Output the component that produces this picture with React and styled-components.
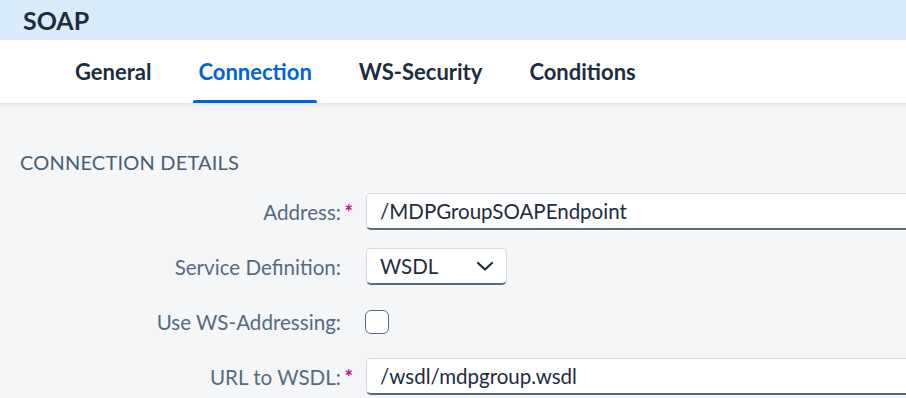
import styled, { createGlobalStyle } from 'styled-components';

const GlobalStyle = createGlobalStyle`
  html, body {
    margin: 0;
    padding: 0;
    background: #f5f6f7;
    overflow: hidden;
    font-family: Lato, 'Liberation Sans', sans-serif;
  }
`;

const Page = styled.div`
  width: 906px;
  height: 398px;
  overflow: hidden;
  background: #f5f6f7;
`;

const Header = styled.div`
  height: 40px;
  display: flex;
  align-items: center;
  padding-left: 23px;
  background: #d9ecfd;
  color: #1d2d3e;
  font-size: 25px;
  font-weight: 700;
`;

const TabBar = styled.div`
  height: 63px;
  display: flex;
  align-items: stretch;
  gap: 37px;
  padding-left: 70px;
  background: #fff;
  border-bottom: 1px solid #e5e7e9;
  box-shadow: 0 2px 2px rgba(34, 53, 72, 0.06);
`;

const Tab = styled.div`
  position: relative;
  display: flex;
  align-items: center;
  padding: 0 5px;
  font-size: 22px;
  font-weight: 700;
  color: ${(props) => (props.active ? '#0064d9' : '#1d2d3e')};

  &::after {
    content: '';
    display: ${(props) => (props.active ? 'block' : 'none')};
    position: absolute;
    left: 0;
    right: 0;
    bottom: 0;
    height: 3px;
    border-radius: 2px 2px 0 0;
    background: #0064d9;
  }
`;

const Content = styled.div`
  padding: 46px 0 0 20px;
`;

const SectionTitle = styled.div`
  color: #475e75;
  font-size: 20px;
  line-height: 24px;
  letter-spacing: 0.2px;
  margin-bottom: 10px;
`;

const Form = styled.div`
  display: grid;
  grid-template-columns: 333px 700px;
  grid-auto-rows: 55px;
  column-gap: 13px;
  align-items: center;
`;

const Label = styled.div`
  display: flex;
  justify-content: flex-end;
  align-items: center;
  color: #556b82;
  font-size: 20.6px;
`;

const Required = styled.span`
  display: inline-block;
  width: 12px;
  text-align: right;
  color: #c0128a;
  font-weight: 700;
  font-size: 20px;
`;

const Field = styled.div`
  display: flex;
  align-items: center;
  box-sizing: border-box;
  height: 37px;
  width: ${(props) => (props.width ? `${props.width}px` : '100%')};
  padding: 0 12px 0 13px;
  background: #fff;
  border: 1px solid #d5dadf;
  border-bottom: 2px solid #556b82;
  border-radius: 5px;
  color: #1d2d3e;
  font-size: 20.5px;
`;

const SelectText = styled.span`
  flex: 1;
`;

const Checkbox = styled.div`
  box-sizing: border-box;
  width: 24px;
  height: 24px;
  margin-left: -1px;
  background: #fff;
  border: 1.5px solid #556b82;
  border-radius: 6px;
`;

const Chevron = () => (
  <svg width="18" height="12" viewBox="0 0 18 12" fill="none">
    <path
      d="M2 3l7 6.5L16 3"
      stroke="#1d2d3e"
      strokeWidth="2.2"
      strokeLinecap="round"
      strokeLinejoin="round"
    />
  </svg>
);

const tabs = ['General', 'Connection', 'WS-Security', 'Conditions'];

export default function App() {
  return (
    <Page>
      <GlobalStyle />
      <Header>SOAP</Header>
      <TabBar>
        {tabs.map((tab) => (
          <Tab key={tab} active={tab === 'Connection'}>
            {tab}
          </Tab>
        ))}
      </TabBar>
      <Content>
        <SectionTitle>CONNECTION DETAILS</SectionTitle>
        <Form>
          <Label>
            Address:<Required>*</Required>
          </Label>
          <Field>/MDPGroupSOAPEndpoint</Field>

          <Label>
            Service Definition:<Required />
          </Label>
          <Field width={141}>
            <SelectText>WSDL</SelectText>
            <Chevron />
          </Field>

          <Label>
            Use WS-Addressing:<Required />
          </Label>
          <div>
            <Checkbox />
          </div>

          <Label>
            URL to WSDL:<Required>*</Required>
          </Label>
          <Field>/wsdl/mdpgroup.wsdl</Field>
        </Form>
      </Content>
    </Page>
  );
}
